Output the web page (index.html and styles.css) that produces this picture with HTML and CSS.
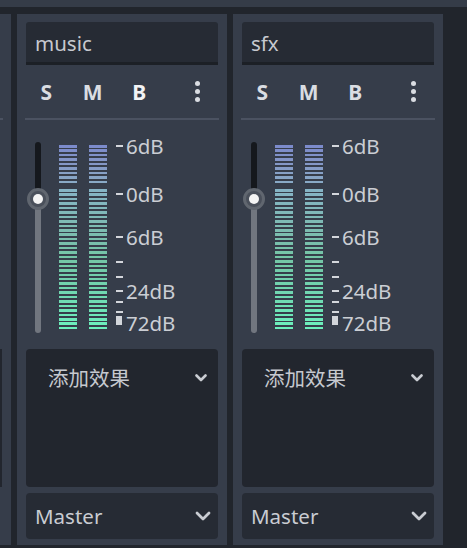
FILE: index.html
```html
<!DOCTYPE html>
<html lang="zh">
<head>
<meta charset="utf-8">
<title>Audio Buses</title>
<link rel="stylesheet" href="styles.css">
</head>
<body>
<div class="topbar"></div>
<div class="buses">
  <div class="bus-stub">
    <div class="stub-sep"></div>
    <div class="stub-fx"></div>
  </div>

  <div class="bus">
    <div class="bus-name">music</div>
    <div class="bus-buttons">
      <span class="btn">S</span>
      <span class="btn">M</span>
      <span class="btn btn-b">B</span>
      <span class="btn btn-menu"><i class="dot"></i><i class="dot"></i><i class="dot"></i></span>
    </div>
    <div class="sep"></div>
    <div class="meter-area">
      <div class="slider">
        <div class="track"></div>
        <div class="handle"><div class="handle-dot"></div></div>
      </div>
      <div class="meter">
        <div class="seg-group seg-top"></div>
        <div class="seg-group seg-bottom"></div>
      </div>
      <div class="meter meter-2">
        <div class="seg-group seg-top"></div>
        <div class="seg-group seg-bottom"></div>
      </div>
      <div class="scale">
        <div class="tick" style="top:25px"></div>
        <div class="tick" style="top:73px"></div>
        <div class="tick" style="top:116px"></div>
        <div class="tick" style="top:141px"></div>
        <div class="tick" style="top:156px"></div>
        <div class="tick" style="top:170px"></div>
        <div class="tick" style="top:181px"></div>
        <div class="tick" style="top:191px"></div>
        <div class="tick tick-block" style="top:196px"></div>
        <div class="label" style="top:26px">6dB</div>
        <div class="label" style="top:74px">0dB</div>
        <div class="label" style="top:117px">6dB</div>
        <div class="label" style="top:171px">24dB</div>
        <div class="label" style="top:203px">72dB</div>
      </div>
    </div>
    <div class="effects">
      <div class="effects-add">
        <span class="effects-text">添加效果</span>
        <svg class="chev chev-sm" viewBox="0 0 12 8" width="12" height="8"><path d="M1.5 1.5 L6 6 L10.5 1.5" fill="none" stroke="#c9ccd2" stroke-width="2.6" stroke-linecap="round" stroke-linejoin="round"/></svg>
      </div>
    </div>
    <div class="send">
      <span class="send-text">Master</span>
      <svg class="chev" viewBox="0 0 16 10" width="16" height="10"><path d="M2 2 L8 8 L14 2" fill="none" stroke="#c9ccd2" stroke-width="2.8" stroke-linecap="round" stroke-linejoin="round"/></svg>
    </div>
  </div>

  <div class="bus">
    <div class="bus-name">sfx</div>
    <div class="bus-buttons">
      <span class="btn">S</span>
      <span class="btn">M</span>
      <span class="btn">B</span>
      <span class="btn btn-menu"><i class="dot"></i><i class="dot"></i><i class="dot"></i></span>
    </div>
    <div class="sep"></div>
    <div class="meter-area">
      <div class="slider">
        <div class="track"></div>
        <div class="handle"><div class="handle-dot"></div></div>
      </div>
      <div class="meter">
        <div class="seg-group seg-top"></div>
        <div class="seg-group seg-bottom"></div>
      </div>
      <div class="meter meter-2">
        <div class="seg-group seg-top"></div>
        <div class="seg-group seg-bottom"></div>
      </div>
      <div class="scale">
        <div class="tick" style="top:25px"></div>
        <div class="tick" style="top:73px"></div>
        <div class="tick" style="top:116px"></div>
        <div class="tick" style="top:141px"></div>
        <div class="tick" style="top:156px"></div>
        <div class="tick" style="top:170px"></div>
        <div class="tick" style="top:181px"></div>
        <div class="tick" style="top:191px"></div>
        <div class="tick tick-block" style="top:196px"></div>
        <div class="label" style="top:26px">6dB</div>
        <div class="label" style="top:74px">0dB</div>
        <div class="label" style="top:117px">6dB</div>
        <div class="label" style="top:171px">24dB</div>
        <div class="label" style="top:203px">72dB</div>
      </div>
    </div>
    <div class="effects">
      <div class="effects-add">
        <span class="effects-text">添加效果</span>
        <svg class="chev chev-sm" viewBox="0 0 12 8" width="12" height="8"><path d="M1.5 1.5 L6 6 L10.5 1.5" fill="none" stroke="#c9ccd2" stroke-width="2.6" stroke-linecap="round" stroke-linejoin="round"/></svg>
      </div>
    </div>
    <div class="send">
      <span class="send-text">Master</span>
      <svg class="chev" viewBox="0 0 16 10" width="16" height="10"><path d="M2 2 L8 8 L14 2" fill="none" stroke="#c9ccd2" stroke-width="2.8" stroke-linecap="round" stroke-linejoin="round"/></svg>
    </div>
  </div>
</div>
</body>
</html>
```
FILE: styles.css
```css
* { box-sizing: border-box; }
html, body {
  margin: 0;
  padding: 0;
}
body {
  width: 467px;
  height: 548px;
  overflow: hidden;
  background: #21252c;
  font-family: "Noto Sans", "Noto Sans CJK SC", sans-serif;
  color: #c9ccd2;
}
.topbar {
  height: 7px;
  background: #353c48;
}
.buses {
  margin-top: 7px;
  display: flex;
  gap: 6px;
  align-items: flex-start;
}
.bus-stub {
  width: 11px;
  height: 531px;
  background: #363d4a;
  display: flex;
  flex-direction: column;
}
.stub-sep {
  margin-top: 104px;
  width: 3px;
  height: 2px;
  background: #4b5261;
}
.stub-fx {
  margin-top: 229px;
  width: 2px;
  height: 138px;
  background: #22262e;
}
.bus {
  width: 210px;
  height: 531px;
  background: #363d4a;
  padding: 8px 9px 6px;
  display: flex;
  flex-direction: column;
}
.bus-name {
  height: 43px;
  background: #262b34;
  border-bottom: 3px solid #1c2026;
  border-radius: 3px 3px 0 0;
  padding-left: 9px;
  font-size: 20.5px;
  line-height: 42px;
  color: #c6c9cf;
}
.bus-buttons {
  height: 53px;
  display: flex;
  align-items: center;
  gap: 6px;
}
.btn {
  width: 42px;
  text-align: center;
  font-size: 21px;
  font-weight: 700;
  color: #dadde2;
  line-height: 20px;
}
.btn-b { color: #f2f3f5; }
.btn-menu {
  margin-left: 12px;
  display: flex;
  flex-direction: column;
  align-items: center;
  gap: 3px;
}
.dot {
  display: block;
  width: 5px;
  height: 5px;
  border-radius: 50%;
  background: #dadde2;
}
.sep {
  height: 2px;
  margin: 0 -1px;
  background: #4b5261;
}
.meter-area {
  height: 229px;
  display: flex;
  align-items: flex-start;
}
.slider {
  position: relative;
  margin-left: 1px;
  margin-top: 22px;
  width: 22px;
  height: 191px;
  display: flex;
  justify-content: center;
}
.track {
  width: 6px;
  height: 191px;
  border-radius: 3px;
  background: linear-gradient(to bottom, #15181d 0, #15181d 57px, #71767f 57px, #71767f 100%);
}
.handle {
  position: absolute;
  left: 0;
  top: 46px;
  width: 22px;
  height: 22px;
  border-radius: 50%;
  background: #4a505b;
  border: 3px solid #60666f;
  display: flex;
  align-items: center;
  justify-content: center;
}
.handle-dot {
  width: 10px;
  height: 10px;
  border-radius: 50%;
  background: #f4f4f4;
}
.meter {
  margin-left: 10px;
  margin-top: 25px;
  width: 18px;
  display: flex;
  flex-direction: column;
}
.meter-2 { margin-left: 12px; }
.seg-group {
  width: 18px;
  -webkit-mask-image: repeating-linear-gradient(to bottom, #000 0, #000 2.5px, transparent 2.5px, transparent 4.45px);
  mask-image: repeating-linear-gradient(to bottom, #000 0, #000 2.5px, transparent 2.5px, transparent 4.45px);
}
.seg-top {
  height: 38.2px;
  background: linear-gradient(to bottom, #7b8acc 0%, #8496c6 45%, #89aac6 100%);
}
.seg-bottom {
  margin-top: 5.6px;
  height: 141.2px;
  background: linear-gradient(to bottom, #86b4c6 0%, #7cbcb0 30%, #74c6a6 50%, #70d8b2 75%, #6cf2bd 100%);
}
.scale {
  position: relative;
  margin-left: 9px;
  flex: 1;
  height: 229px;
}
.tick {
  position: absolute;
  left: 0;
  width: 7px;
  height: 2px;
  background: #d3d6db;
}
.tick-block {
  width: 6px;
  height: 9px;
}
.label {
  position: absolute;
  left: 10px;
  font-size: 20.5px;
  line-height: 20px;
  height: 20px;
  transform: translateY(-10px);
  color: #cbced4;
  white-space: nowrap;
}
.effects {
  margin-top: 0;
  height: 138px;
  background: #22262e;
  border-radius: 4px;
}
.effects-add {
  display: flex;
  align-items: center;
  height: 56px;
  padding: 0 11px 0 22px;
}
.effects-text {
  font-family: "Noto Sans CJK SC", sans-serif;
  font-size: 20.5px;
  color: #c6c9cf;
  flex: 1;
}
.chev-sm { margin-top: 1px; }
.send {
  margin-top: 6px;
  height: 46px;
  background: #262b34;
  border-radius: 4px;
  display: flex;
  align-items: center;
  padding: 0 7px 0 9px;
}
.send-text {
  flex: 1;
  font-size: 20.5px;
  color: #c9ccd2;
}
```
